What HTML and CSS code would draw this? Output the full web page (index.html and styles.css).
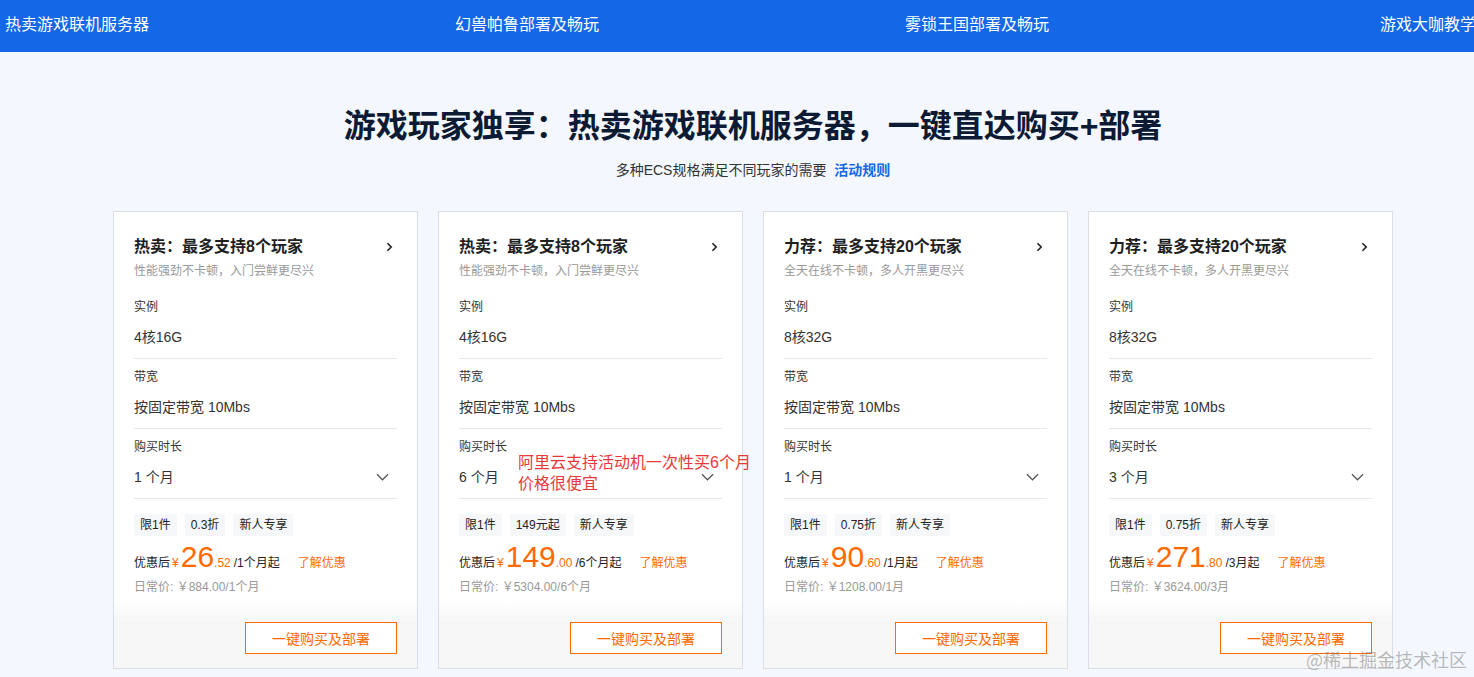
FILE: index.html
```html
<!DOCTYPE html>
<html lang="zh-CN">
  <head>
    <meta charset="UTF-8" />
    <meta name="viewport" content="width=device-width, initial-scale=1.0" />
    <title>游戏联机服务器</title>
    <link rel="stylesheet" href="styles.css">
  </head>
  <body>
    <nav class="topnav">
      <a class="nav-item">热卖游戏联机服务器</a>
      <a class="nav-item">幻兽帕鲁部署及畅玩</a>
      <a class="nav-item">雾锁王国部署及畅玩</a>
      <a class="nav-item nav-item-last">游戏大咖教学</a>
    </nav>

    <main class="main">
      <h1>游戏玩家独享：热卖游戏联机服务器，一键直达购买+部署</h1>
      <p class="subtitle">多种ECS规格满足不同玩家的需要 <a class="rule-link">活动规则</a></p>

      <div class="cards">
        <div class="card">
          <div class="card-body">
            <div class="card-head">
              <div class="card-title">热卖：最多支持8个玩家</div>
              <svg class="arrow-right" viewBox="0 0 8 12" width="7" height="10"><path d="M1.5 1.5 6 6l-4.5 4.5" fill="none" stroke="#222" stroke-width="2"/></svg>
            </div>
            <div class="card-desc">性能强劲不卡顿，入门尝鲜更尽兴</div>

            <div class="spec spec-first">
              <div class="spec-label">实例</div>
              <div class="spec-value">4核16G</div>
            </div>
            <div class="spec">
              <div class="spec-label">带宽</div>
              <div class="spec-value">按固定带宽 10Mbs</div>
            </div>
            <div class="spec">
              <div class="spec-label">购买时长</div>
              <div class="spec-value select">1 个月
                <svg viewBox="0 0 14 8" width="13" height="8"><path d="M1 1l6 6 6-6" fill="none" stroke="#555" stroke-width="1.3"/></svg>
              </div>
            </div>

            <div class="tags">
              <span class="tag">限1件</span><span class="tag">0.3折</span><span class="tag">新人专享</span>
            </div>
            <div class="price-row">
              <span class="p-label">优惠后</span><span class="p-yen">¥</span><span class="p-int">26</span><span class="p-dec">.52</span><span class="p-unit">/1个月起</span>
              <a class="p-more">了解优惠</a>
            </div>
            <div class="orig-price">日常价: ￥884.00/1个月</div>
          </div>
          <div class="card-foot">
            <button class="btn-buy">一键购买及部署</button>
          </div>
        </div>

        <div class="card">
          <div class="card-body">
            <div class="card-head">
              <div class="card-title">热卖：最多支持8个玩家</div>
              <svg class="arrow-right" viewBox="0 0 8 12" width="7" height="10"><path d="M1.5 1.5 6 6l-4.5 4.5" fill="none" stroke="#222" stroke-width="2"/></svg>
            </div>
            <div class="card-desc">性能强劲不卡顿，入门尝鲜更尽兴</div>

            <div class="spec spec-first">
              <div class="spec-label">实例</div>
              <div class="spec-value">4核16G</div>
            </div>
            <div class="spec">
              <div class="spec-label">带宽</div>
              <div class="spec-value">按固定带宽 10Mbs</div>
            </div>
            <div class="spec">
              <div class="spec-label">购买时长</div>
              <div class="spec-value select">6 个月
                <svg viewBox="0 0 14 8" width="13" height="8"><path d="M1 1l6 6 6-6" fill="none" stroke="#555" stroke-width="1.3"/></svg>
              </div>
              <div class="note">阿里云支持活动机一次性买6个月<br>价格很便宜</div>
            </div>

            <div class="tags">
              <span class="tag">限1件</span><span class="tag">149元起</span><span class="tag">新人专享</span>
            </div>
            <div class="price-row">
              <span class="p-label">优惠后</span><span class="p-yen">¥</span><span class="p-int">149</span><span class="p-dec">.00</span><span class="p-unit">/6个月起</span>
              <a class="p-more">了解优惠</a>
            </div>
            <div class="orig-price">日常价: ￥5304.00/6个月</div>
          </div>
          <div class="card-foot">
            <button class="btn-buy">一键购买及部署</button>
          </div>
        </div>

        <div class="card">
          <div class="card-body">
            <div class="card-head">
              <div class="card-title">力荐：最多支持20个玩家</div>
              <svg class="arrow-right" viewBox="0 0 8 12" width="7" height="10"><path d="M1.5 1.5 6 6l-4.5 4.5" fill="none" stroke="#222" stroke-width="2"/></svg>
            </div>
            <div class="card-desc">全天在线不卡顿，多人开黑更尽兴</div>

            <div class="spec spec-first">
              <div class="spec-label">实例</div>
              <div class="spec-value">8核32G</div>
            </div>
            <div class="spec">
              <div class="spec-label">带宽</div>
              <div class="spec-value">按固定带宽 10Mbs</div>
            </div>
            <div class="spec">
              <div class="spec-label">购买时长</div>
              <div class="spec-value select">1 个月
                <svg viewBox="0 0 14 8" width="13" height="8"><path d="M1 1l6 6 6-6" fill="none" stroke="#555" stroke-width="1.3"/></svg>
              </div>
            </div>

            <div class="tags">
              <span class="tag">限1件</span><span class="tag">0.75折</span><span class="tag">新人专享</span>
            </div>
            <div class="price-row">
              <span class="p-label">优惠后</span><span class="p-yen">¥</span><span class="p-int">90</span><span class="p-dec">.60</span><span class="p-unit">/1月起</span>
              <a class="p-more">了解优惠</a>
            </div>
            <div class="orig-price">日常价: ￥1208.00/1月</div>
          </div>
          <div class="card-foot">
            <button class="btn-buy">一键购买及部署</button>
          </div>
        </div>

        <div class="card">
          <div class="card-body">
            <div class="card-head">
              <div class="card-title">力荐：最多支持20个玩家</div>
              <svg class="arrow-right" viewBox="0 0 8 12" width="7" height="10"><path d="M1.5 1.5 6 6l-4.5 4.5" fill="none" stroke="#222" stroke-width="2"/></svg>
            </div>
            <div class="card-desc">全天在线不卡顿，多人开黑更尽兴</div>

            <div class="spec spec-first">
              <div class="spec-label">实例</div>
              <div class="spec-value">8核32G</div>
            </div>
            <div class="spec">
              <div class="spec-label">带宽</div>
              <div class="spec-value">按固定带宽 10Mbs</div>
            </div>
            <div class="spec">
              <div class="spec-label">购买时长</div>
              <div class="spec-value select">3 个月
                <svg viewBox="0 0 14 8" width="13" height="8"><path d="M1 1l6 6 6-6" fill="none" stroke="#555" stroke-width="1.3"/></svg>
              </div>
            </div>

            <div class="tags">
              <span class="tag">限1件</span><span class="tag">0.75折</span><span class="tag">新人专享</span>
            </div>
            <div class="price-row">
              <span class="p-label">优惠后</span><span class="p-yen">¥</span><span class="p-int">271</span><span class="p-dec">.80</span><span class="p-unit">/3月起</span>
              <a class="p-more">了解优惠</a>
            </div>
            <div class="orig-price">日常价: ￥3624.00/3月</div>
          </div>
          <div class="card-foot">
            <button class="btn-buy">一键购买及部署</button>
          </div>
        </div>
      </div>
    </main>

    <div class="watermark">@稀土掘金技术社区</div>
  </body>
</html>
```

FILE: styles.css
```css
body {
  margin: 0;
  font-family: "Liberation Sans", Arial, "Noto Sans CJK SC", sans-serif;
  background-color: #f4f8fe;
  color: #333;
  overflow: hidden;
  height: 677px;
}

/* top navigation */
.topnav {
  height: 52px;
  background-color: #1467e6;
  display: flex;
  align-items: center;
  padding-left: 5px;
  white-space: nowrap;
  overflow: hidden;
}

.nav-item {
  flex: 0 0 450px;
  color: #fff;
  font-size: 16px;
  padding-bottom: 6px;
}

.nav-item-last {
  margin-left: 25px;
}

/* main area */
.main {
  width: 1280px;
  margin-left: 113px;
}

h1 {
  margin: 54px 0 0;
  text-align: center;
  font-size: 32px;
  line-height: 40px;
  font-weight: bold;
  color: #0c1a33;
}

.subtitle {
  margin: 15px 0 0;
  text-align: center;
  font-size: 14px;
  line-height: 18px;
  color: #333;
}

.rule-link {
  color: #1467e6;
  font-weight: bold;
  margin-left: 4px;
}

.cards {
  display: flex;
  gap: 20px;
  margin-top: 32px;
}

.card {
  width: 303px;
  height: 456px;
  background: #fff;
  border: 1px solid #d9dee8;
  display: flex;
  flex-direction: column;
}

.card-body {
  padding: 24px 20px 0;
}

.card-head {
  display: flex;
  align-items: center;
  justify-content: space-between;
  padding-right: 4px;
}

.card-title {
  font-size: 16px;
  line-height: 22px;
  font-weight: bold;
  color: #1f1f1f;
}

.card-desc {
  margin-top: 4px;
  font-size: 12px;
  line-height: 18px;
  color: #999;
}

.spec {
  position: relative;
  border-bottom: 1px solid #e8e8e8;
  padding: 9px 0 10px;
}

.spec.spec-first {
  padding-top: 18px;
}

.spec-label {
  font-size: 12px;
  line-height: 18px;
  color: #333;
}

.spec-value {
  margin-top: 10px;
  font-size: 14px;
  line-height: 22px;
  color: #333;
}

.spec-value.select {
  display: flex;
  align-items: center;
  justify-content: space-between;
  padding-right: 8px;
}

/* red annotation pasted on the screenshot */
.note {
  position: absolute;
  left: 59px;
  top: 23px;
  color: #e8393a;
  font-size: 16px;
  line-height: 21px;
  white-space: nowrap;
}

.tags {
  display: flex;
  gap: 8px;
  margin-top: 15px;
}

.tag {
  background-color: #f6f7f9;
  font-size: 12px;
  line-height: 22px;
  padding: 0 6px;
  color: #222;
}

.price-row {
  display: flex;
  align-items: baseline;
  margin-top: 6px;
  font-size: 12px;
  line-height: 18px;
  color: #222;
}

.p-yen,
.p-int,
.p-dec,
.p-more {
  color: #ff6a00;
}

.p-yen {
  margin-left: 2px;
}

.p-int {
  font-size: 30px;
  line-height: 30px;
  margin-left: 2px;
}

.p-unit {
  margin-left: 3px;
}

.p-more {
  margin-left: 18px;
}

.orig-price {
  margin-top: 6px;
  font-size: 12px;
  line-height: 18px;
  color: #999;
}

.card-foot {
  margin-top: auto;
  height: 68px;
  background: linear-gradient(#fff, #f7f7f7 20px);
  display: flex;
  justify-content: flex-end;
  align-items: flex-start;
  padding: 22px 20px 0;
  box-sizing: border-box;
}

.btn-buy {
  width: 152px;
  height: 32px;
  border: 1px solid #ff6a00;
  background: #fff;
  color: #ff6a00;
  font-family: inherit;
  font-size: 14px;
  cursor: pointer;
}

.watermark {
  position: absolute;
  right: 7px;
  bottom: 5px;
  font-size: 18px;
  color: rgba(120, 120, 120, 0.5);
  font-family: "Noto Sans CJK SC", sans-serif;
}
```
